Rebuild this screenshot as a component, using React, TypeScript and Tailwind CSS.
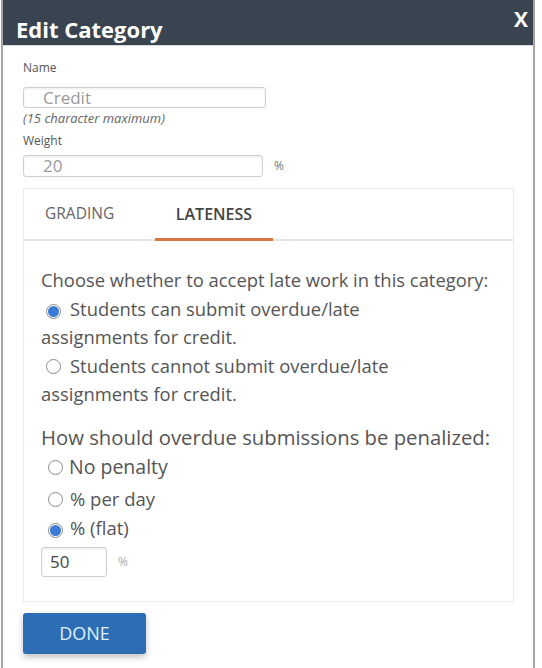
import React from 'react';

const Radio: React.FC<{ checked?: boolean }> = ({ checked }) => (
  <span className="inline-flex w-[15px] h-[15px] rounded-full border border-[#8a8a8a] bg-white items-center justify-center align-[-1px]">
    {checked && <span className="w-[11px] h-[11px] rounded-full bg-[#3a7bd5]" />}
  </span>
);

const App: React.FC = () => {
  return (
    <div className="w-[542px] h-[668px] bg-white font-['Open_Sans',sans-serif]">
      <div className="ml-px w-[534px] h-full border-x-2 border-[#a4a4a4]">
        <div className="h-[45px] bg-[#3a4450] flex justify-between pl-[13px] pr-[5px]">
          <h2 className="pt-[14px] text-[22px] leading-[30px] font-bold text-white">Edit Category</h2>
          <span className="pt-[5px] text-[21px] leading-[28px] font-bold text-white">X</span>
        </div>
        <div className="h-px bg-[#d6dade]" />

        <div className="pl-[20px] pt-[14px]">
          <label className="block text-[12px] leading-[16px] text-[#555]">Name</label>
          <div className="mt-[11px] w-[243px] h-[21px] border border-[#cfcfcf] rounded-[3px] shadow-[inset_0_1px_2px_rgba(0,0,0,0.08)] pl-[19px] text-[17px] leading-[19px] text-[#9a9a9a]">
            Credit
          </div>
          <div className="mt-[2px] text-[13px] leading-[16px] italic text-[#666]">(15 character maximum)</div>
          <label className="block mt-[7px] text-[12px] leading-[16px] text-[#555]">Weight</label>
          <div className="mt-[6px] flex items-center">
            <div className="w-[240px] h-[22px] border border-[#cfcfcf] rounded-[3px] shadow-[inset_0_1px_2px_rgba(0,0,0,0.08)] pl-[19px] text-[17px] leading-[20px] text-[#9a9a9a]">
              20
            </div>
            <span className="ml-[11px] text-[12px] text-[#777]">%</span>
          </div>
        </div>

        <div className="mt-[11px] ml-[20px] w-[491px] border border-[#ebebeb]">
          <div className="h-[52px] flex border-b-2 border-[#e4e4e4]">
            <div className="w-[131px] pl-[21px] pt-[13px] text-[15.5px] text-[#666]">GRADING</div>
            <div className="w-[118px] flex justify-center pt-[13px] text-[16px] font-semibold text-[#444] border-b-[3px] border-[#d9773f] -mb-[2px]">
              LATENESS
            </div>
          </div>

          <div className="pl-[17px] pt-[25px] pb-[24px] text-[18.4px] leading-[28.5px] text-[#555]">
            <div>Choose whether to accept late work in this category:</div>
            <div className="w-[420px]">
              <span className="ml-[5px] mr-[9px]"><Radio checked /></span>Students can submit overdue/late assignments for credit.
            </div>
            <div className="w-[420px]">
              <span className="ml-[5px] mr-[9px]"><Radio /></span>Students cannot submit overdue/late assignments for credit.
            </div>

            <div className="mt-[14px] text-[20.3px]">How should overdue submissions be penalized:</div>
            <div className="text-[19.5px] leading-[32px]">
              <span className="ml-[7px] mr-[6px]"><Radio /></span>No penalty
            </div>
            <div className="text-[18.5px] leading-[31px]">
              <span className="ml-[7px] mr-[7px]"><Radio /></span>% per day
            </div>
            <div className="text-[18.5px] leading-[28px]">
              <span className="ml-[7px] mr-[7px]"><Radio checked /></span>% (flat)
            </div>
            <div className="mt-[5px] flex items-center">
              <div className="w-[66px] h-[30px] border border-[#cfcfcf] rounded-[3px] shadow-[inset_0_1px_2px_rgba(0,0,0,0.08)] pl-[8px] text-[17px] leading-[28px] text-[#444]">
                50
              </div>
              <span className="ml-[11px] text-[12px] text-[#aaa]">%</span>
            </div>
          </div>
        </div>

        <button className="mt-[11px] ml-[20px] w-[123px] h-[41px] bg-[#2d6db4] rounded-[3px] shadow-[0_3px_6px_rgba(0,0,0,0.25)] text-[18px] text-[#dff1ff]">
          DONE
        </button>
      </div>
    </div>
  );
};

export default App;
